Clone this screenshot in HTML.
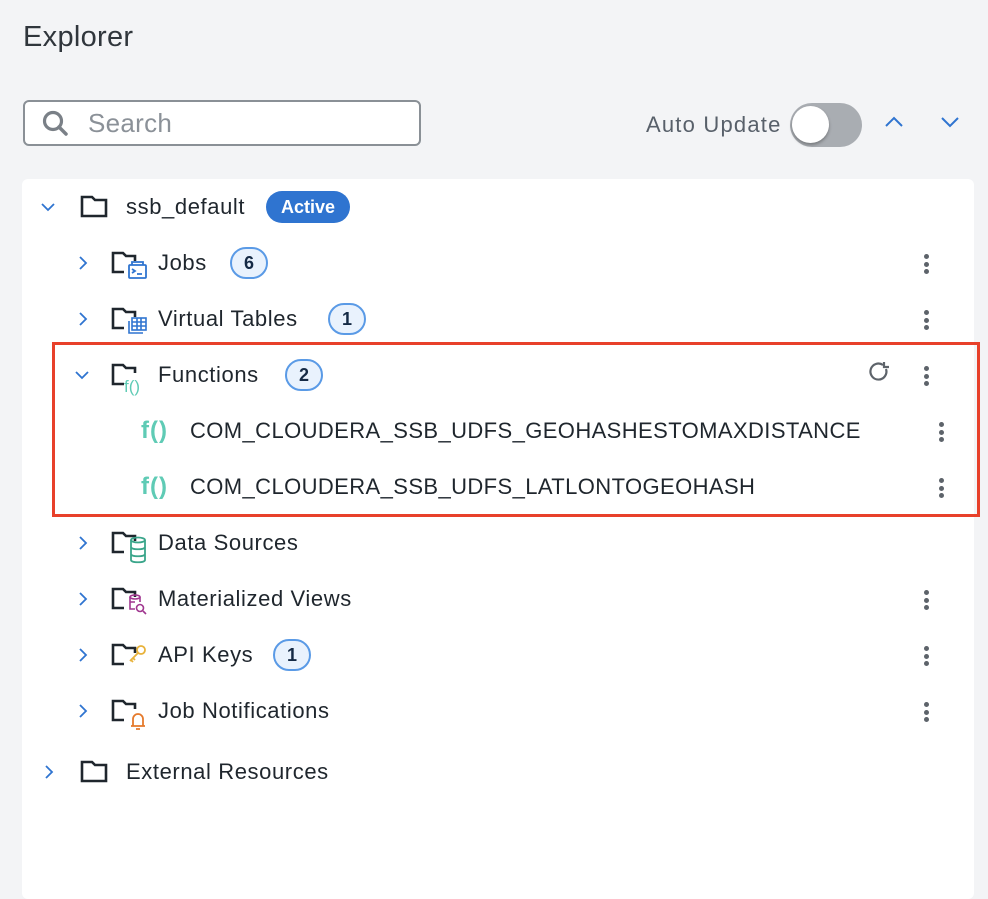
<!DOCTYPE html>
<html><head><style>
*{margin:0;padding:0;box-sizing:border-box}
body{width:988px;height:882px;background:#f3f4f6;font-family:"Liberation Sans",Arial,sans-serif;position:relative;overflow:hidden;color:#1d2329}
.a{position:absolute}
.t{position:absolute;font-size:22px;line-height:26px;color:#1f262d;white-space:nowrap;letter-spacing:0.6px}
.badge{position:absolute;width:38px;height:32px;border-radius:16px;background:#e9f2fd;border:2px solid #5a9ae6;font-weight:bold;font-size:18px;color:#152a45;text-align:center;line-height:28px}
.keb{position:absolute;width:4px}
.keb i{display:block;width:5px;height:5px;border-radius:50%;background:#5d636a;margin-bottom:2.5px}
.fx{position:absolute;font-size:24px;font-weight:bold;color:#5fcbb5;letter-spacing:1px}
</style></head><body>
<div class="a" style="left:23px;top:21px;font-size:29px;color:#30363c;letter-spacing:0.3px">Explorer</div>
<div class="a" style="left:23px;top:100px;width:398px;height:46px;border:2px solid #8a9096;border-radius:6px;background:#fff"></div>
<svg class="a" style="left:40px;top:108px" width="32" height="32" viewBox="0 0 32 32"><circle cx="13" cy="13" r="8.5" fill="none" stroke="#7a8087" stroke-width="3.2"/><path d="M19 19l7 7" stroke="#7a8087" stroke-width="3.5" stroke-linecap="round"/></svg>
<div class="a" style="left:88px;top:108px;font-size:26px;color:#8b9198;letter-spacing:0.3px">Search</div>
<div class="a" style="left:646px;top:112px;font-size:22px;color:#58606a;letter-spacing:1.2px">Auto Update</div>
<div class="a" style="left:790px;top:103px;width:72px;height:44px;border-radius:22px;background:#a9adb2"></div>
<div class="a" style="left:792px;top:106px;width:37px;height:37px;border-radius:50%;background:#fff;box-shadow:0 2px 3px rgba(0,0,0,.3)"></div>
<svg class="a" style="left:884px;top:114px" width="20" height="16"><path d="M2 12l8-8 8 8" fill="none" stroke="#2f74d0" stroke-width="2"/></svg>
<svg class="a" style="left:940px;top:114px" width="20" height="16"><path d="M2 4l8 8 8-8" fill="none" stroke="#2f74d0" stroke-width="2"/></svg>
<div class="a" style="left:22px;top:179px;width:952px;height:720px;background:#fff;border-radius:6px"></div>
<svg class="a" style="left:0;top:0" width="988" height="882">
<g fill="none" stroke="#2f74d0" stroke-width="1.8">
<path d="M42 204l6 6 6-6"/>
<path d="M80 257l6 6-6 6"/><path d="M80 313l6 6-6 6"/>
<path d="M76 372l6 6 6-6"/>
<path d="M80 537l6 6-6 6"/><path d="M80 593l6 6-6 6"/><path d="M80 649l6 6-6 6"/><path d="M80 705l6 6-6 6"/>
<path d="M46 766l6 6-6 6"/>
</g>
<g fill="none" stroke="#1f262d" stroke-width="2.6">
<path d="M82 197h10l3 3h11v16h-24z"/>
<path d="M82 762h10l3 3h11v16h-24z"/>
<path d="M124 272h-11v-19h10l3 3h9v5"/>
<path d="M124 328h-11v-19h10l3 3h9v5"/>
<path d="M124 384h-11v-19h10l3 3h9v5"/>
<path d="M124 552h-11v-19h10l3 3h9v5"/>
<path d="M124 608h-11v-19h10l3 3h9v5"/>
<path d="M124 664h-11v-19h10l3 3h9v5"/>
<path d="M124 720h-11v-19h10l3 3h9v5"/>
</g>
<g fill="none" stroke="#2f74d0" stroke-width="1.8"><rect x="129" y="265" width="17" height="13" rx="1"/><path d="M132 265v-3h11v3M132 269l3 2-3 2M137 274h5"/></g>
<g fill="none" stroke="#2f74d0" stroke-width="1.6"><rect x="132" y="318" width="14" height="12"/><path d="M132 322h14M132 326h14M137 318v12M141 318v12M129 321v12h14"/></g>
<text x="124" y="392" font-family="Liberation Sans" font-size="17" fill="#5fcbb5">f()</text>
<g fill="none" stroke="#3aa58a" stroke-width="1.8"><ellipse cx="138" cy="540" rx="7" ry="2.5"/><path d="M131 540v20c0 3 14 3 14 0v-20M131 547c0 3 14 3 14 0M131 554c0 3 14 3 14 0"/></g>
<g fill="none" stroke="#a0368f" stroke-width="1.6"><ellipse cx="135" cy="597" rx="5" ry="2"/><path d="M130 597v12h5M140 597v5M130 602h5"/><circle cx="140" cy="608" r="3.5"/><path d="M143 611l3 3"/></g>
<g fill="none" stroke="#e8b23a" stroke-width="1.8"><circle cx="141" cy="650" r="4"/><path d="M138 653l-8 8M133 658l2 2M131 660l2 2"/></g>
<g fill="none" stroke="#e57a2c" stroke-width="1.8"><path d="M131 726h14M133 726v-7a5 5 0 0 1 10 0v7M136 729h4"/></g>
<g fill="none" stroke="#5d636a" stroke-width="2.2"><path d="M886 369a8 8 0 1 1-3-4"/><path d="M884 362v5h5"/></g>
</svg>
<div class="fx" style="left:141px;top:417px">f()</div>
<div class="fx" style="left:141px;top:473px">f()</div>
<div class="t" style="left:126px;top:194px">ssb_default</div>
<div class="a" style="left:266px;top:191px;width:84px;height:32px;border-radius:16px;background:#2f74d0;color:#fff;font-weight:bold;font-size:18px;text-align:center;line-height:32px">Active</div>
<div class="t" style="left:158px;top:250px">Jobs</div><div class="badge" style="left:230px;top:247px">6</div>
<div class="t" style="left:158px;top:306px">Virtual Tables</div><div class="badge" style="left:328px;top:303px">1</div>
<div class="t" style="left:158px;top:362px">Functions</div><div class="badge" style="left:285px;top:359px">2</div>
<div class="t" style="left:190px;top:418px;letter-spacing:0.4px">COM_CLOUDERA_SSB_UDFS_GEOHASHESTOMAXDISTANCE</div>
<div class="t" style="left:190px;top:474px;letter-spacing:0.4px">COM_CLOUDERA_SSB_UDFS_LATLONTOGEOHASH</div>
<div class="t" style="left:158px;top:530px">Data Sources</div>
<div class="t" style="left:158px;top:586px">Materialized Views</div>
<div class="t" style="left:158px;top:642px">API Keys</div><div class="badge" style="left:273px;top:639px">1</div>
<div class="t" style="left:158px;top:698px">Job Notifications</div>
<div class="t" style="left:126px;top:759px">External Resources</div>
<div class="keb" style="left:924px;top:254px"><i></i><i></i><i></i></div>
<div class="keb" style="left:924px;top:310px"><i></i><i></i><i></i></div>
<div class="keb" style="left:924px;top:366px"><i></i><i></i><i></i></div>
<div class="keb" style="left:939px;top:422px"><i></i><i></i><i></i></div>
<div class="keb" style="left:939px;top:478px"><i></i><i></i><i></i></div>
<div class="keb" style="left:924px;top:590px"><i></i><i></i><i></i></div>
<div class="keb" style="left:924px;top:646px"><i></i><i></i><i></i></div>
<div class="keb" style="left:924px;top:702px"><i></i><i></i><i></i></div>
<div class="a" style="left:52px;top:342px;width:928px;height:175px;border:3px solid #e8402a"></div>
</body></html>
